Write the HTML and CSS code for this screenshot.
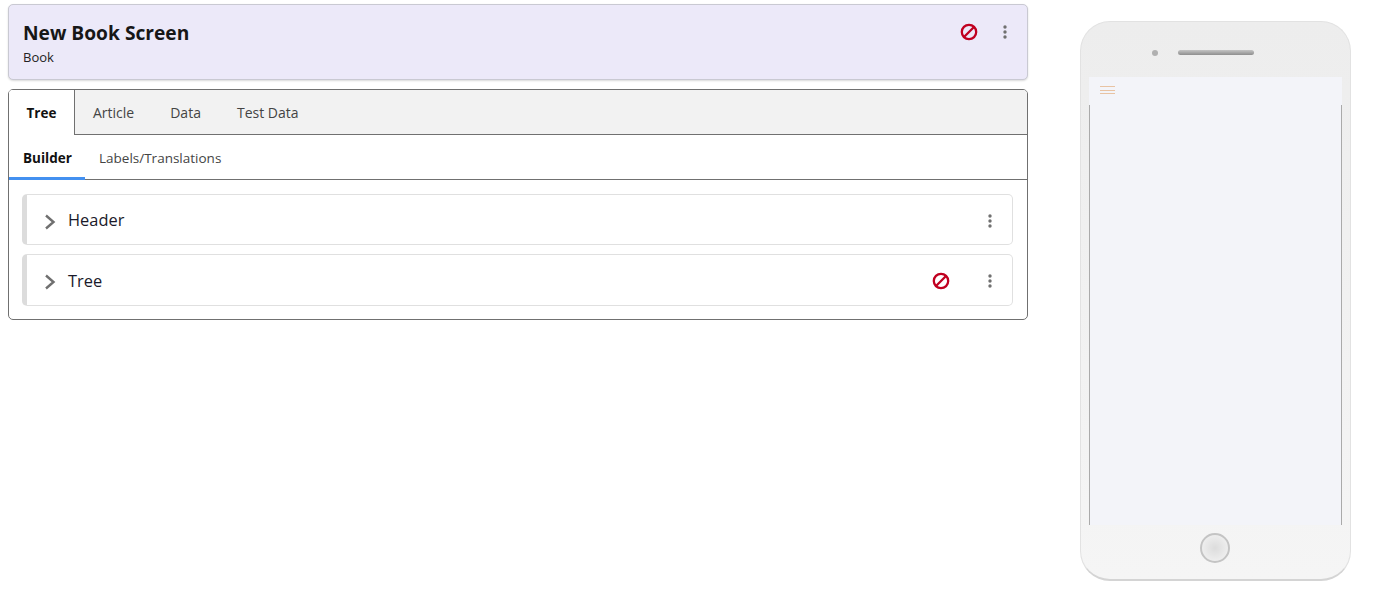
FILE: index.html
```html
<!DOCTYPE html>
<html lang="en">
<head>
    <meta charset="UTF-8">
    <title>New Book Screen</title>
    <link rel="stylesheet" href="styles.css">
</head>
<body>
    <div class="page">
        <div class="editor">
            <div class="screen-card">
                <div class="screen-info">
                    <h1>New Book Screen</h1>
                    <div class="screen-type">Book</div>
                </div>
                <div class="card-actions">
                    <svg class="ban-icon" width="18" height="18" viewBox="0 0 18 18"><circle cx="9" cy="9" r="7.2"/><line x1="4" y1="14" x2="14" y2="4"/></svg>
                    <svg class="more-icon" width="4" height="14" viewBox="0 0 4 14"><circle cx="2" cy="2" r="1.7"/><circle cx="2" cy="7" r="1.7"/><circle cx="2" cy="12" r="1.7"/></svg>
                </div>
            </div>

            <div class="tab-box">
                <div class="tabs">
                    <div class="tab active">Tree</div>
                    <div class="tab">Article</div>
                    <div class="tab">Data</div>
                    <div class="tab">Test Data</div>
                </div>
                <div class="subtabs">
                    <div class="subtab active">Builder</div>
                    <div class="subtab">Labels/Translations</div>
                </div>
                <div class="tree-list">
                    <div class="tree-item header-item">
                        <svg class="chevron" width="12" height="16" viewBox="0 0 12 16"><polyline points="2,1.5 9.5,8 2,14.5"/></svg>
                        <span class="item-name">Header</span>
                        <svg class="more-icon" width="4" height="14" viewBox="0 0 4 14"><circle cx="2" cy="2" r="1.7"/><circle cx="2" cy="7" r="1.7"/><circle cx="2" cy="12" r="1.7"/></svg>
                    </div>
                    <div class="tree-item">
                        <svg class="chevron" width="12" height="16" viewBox="0 0 12 16"><polyline points="2,1.5 9.5,8 2,14.5"/></svg>
                        <span class="item-name">Tree</span>
                        <svg class="ban-icon" width="18" height="18" viewBox="0 0 18 18"><circle cx="9" cy="9" r="7.2"/><line x1="4" y1="14" x2="14" y2="4"/></svg>
                        <svg class="more-icon" width="4" height="14" viewBox="0 0 4 14"><circle cx="2" cy="2" r="1.7"/><circle cx="2" cy="7" r="1.7"/><circle cx="2" cy="12" r="1.7"/></svg>
                    </div>
                </div>
            </div>
        </div>

        <div class="phone">
            <div class="phone-top">
                <span class="camera"></span>
                <span class="speaker"></span>
            </div>
            <div class="phone-screen">
                <div class="burger"><span></span><span></span><span></span></div>
            </div>
            <div class="phone-bottom">
                <span class="home-button"></span>
            </div>
        </div>
    </div>
</body>
</html>
```

FILE: styles.css
```css
* {
    box-sizing: border-box;
}
body {
    margin: 0;
    font-family: 'Open Sans', 'Noto Sans', sans-serif;
    color: #1a1a1a;
    background-color: #fff;
}
.page {
    display: flex;
    align-items: flex-start;
    padding: 4px 0 0 8px;
}
.editor {
    width: 1020px;
}
.screen-card {
    height: 76px;
    display: flex;
    justify-content: space-between;
    padding: 15px 14px 0 14px;
    background-color: #ece9f9;
    border: 1px solid #c9c9d2;
    border-radius: 5px;
    box-shadow: 0 1px 2px rgba(0, 0, 0, 0.15);
}
h1 {
    margin: 0;
    font-size: 19.2px;
    line-height: 26px;
    font-weight: 700;
    color: #171717;
}
.screen-type {
    font-size: 13px;
    line-height: 18px;
    margin-top: 2px;
    color: #222;
}
.card-actions {
    display: flex;
    align-items: center;
    gap: 25px;
    height: 24px;
    padding-right: 6px;
}
.ban-icon {
    fill: none;
    stroke: #c00020;
    stroke-width: 2.3;
}
.more-icon {
    fill: #707070;
}
.tab-box {
    margin-top: 9px;
    height: 231px;
    border: 1px solid #707070;
    border-radius: 5px;
    overflow: hidden;
}
.tabs {
    display: flex;
    height: 45px;
    background-color: #f2f2f2;
    border-bottom: 1px solid #707070;
}
.tab {
    padding: 0 18px;
    line-height: 46px;
    font-size: 14px;
    color: #444;
}
.tab.active {
    width: 66px;
    height: 45px;
    padding: 0;
    text-align: center;
    font-size: 13.5px;
    font-weight: 700;
    color: #111;
    background-color: #fff;
    border-right: 1px solid #707070;
}
.subtabs {
    display: flex;
    height: 45px;
    border-bottom: 1px solid #707070;
}
.subtab {
    padding: 0 14px;
    line-height: 46px;
    font-size: 13.5px;
    color: #444;
}
.subtab.active {
    height: 45px;
    width: 76px;
    font-weight: 700;
    color: #111;
    border-bottom: 3px solid #4390f0;
}
.tree-list {
    display: flex;
    flex-direction: column;
    gap: 9px;
    padding: 14px 14px 0 13px;
}
.tree-item {
    display: flex;
    align-items: center;
    height: 52px;
    padding: 0 20px 0 17px;
    background-color: #fff;
    border: 1px solid #e0e0e0;
    border-left: 5px solid #dcdcdc;
    border-radius: 5px;
}
.tree-item.header-item {
    height: 51px;
}
.chevron {
    fill: none;
    stroke: #707070;
    stroke-width: 2.4;
    margin-top: 4px;
}
.item-name {
    margin-left: 12px;
    flex: 1;
    font-size: 16.4px;
    color: #1a1a2a;
}
.tree-item .ban-icon {
    margin: 2px 38px 0 0;
}
.tree-item .more-icon {
    margin-top: 2px;
}
.phone {
    width: 271px;
    height: 560px;
    margin: 17px 0 0 52px;
    display: flex;
    flex-direction: column;
    border: 1px solid #e2e2e2;
    border-bottom: 2px solid #d4d4d4;
    border-radius: 30px;
    overflow: hidden;
    background: linear-gradient(#ededed, #f5f5f5);
}
.phone-top {
    height: 55px;
    flex-shrink: 0;
    display: flex;
    align-items: center;
    padding: 6px 0 0 71px;
}
.camera {
    width: 6px;
    height: 6px;
    border-radius: 50%;
    background-color: #b0b0b0;
}
.speaker {
    width: 76px;
    height: 5px;
    margin-left: 20px;
    border-radius: 3px;
    background: linear-gradient(#c4c4c4, #8e8e8e);
}
.phone-screen {
    height: 448px;
    margin: 0 8px;
    flex-shrink: 0;
    background-color: #f3f4f9;
    padding: 9px 0 0 10px;
    border-image: linear-gradient(transparent 29px, #aaa 29px) 1;
    border-left: 1px solid;
    border-right: 1px solid;
}
.burger {
    display: flex;
    flex-direction: column;
    gap: 3px;
    width: 15px;
}
.burger span {
    height: 1px;
    background-color: #e8c3a3;
}
.burger span:last-child {
    margin-top: -1px;
}
.phone-bottom {
    flex: 1;
    display: flex;
    justify-content: center;
    padding: 8px 1px 0 0;
}
.home-button {
    width: 30px;
    height: 30px;
    border: 2px solid #c4c4c4;
    border-radius: 50%;
    background: radial-gradient(#dcdcdc, #f5f5f5);
}
```
